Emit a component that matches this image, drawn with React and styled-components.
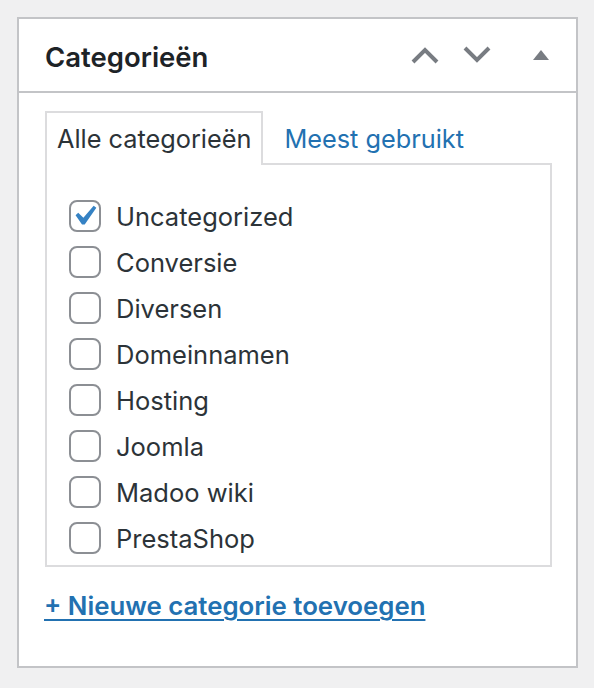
import React from 'react';
import styled, { createGlobalStyle } from 'styled-components';

const categories = [
    { name: 'Uncategorized', checked: true },
    { name: 'Conversie' },
    { name: 'Diversen' },
    { name: 'Domeinnamen' },
    { name: 'Hosting' },
    { name: 'Joomla' },
    { name: 'Madoo wiki' },
    { name: 'PrestaShop' },
];

const App = () => {
    return (
        <>
            <GlobalStyle />
            <Panel>
                <Header>
                    <Title>Categorieën</Title>
                    <Handles>
                        <HandleButton aria-label="Omhoog">
                            <svg width="28" height="18" viewBox="0 0 28 18">
                                <polyline points="2,16 14,4 26,16" fill="none" stroke="#787c82" strokeWidth="4" />
                            </svg>
                        </HandleButton>
                        <HandleButton aria-label="Omlaag">
                            <svg width="28" height="18" viewBox="0 0 28 18">
                                <polyline points="2,2 14,14 26,2" fill="none" stroke="#787c82" strokeWidth="4" />
                            </svg>
                        </HandleButton>
                        <HandleButton $last aria-label="Inklappen">
                            <svg width="16" height="10" viewBox="0 0 16 10">
                                <polygon points="8,0 16,10 0,10" fill="#787c82" />
                            </svg>
                        </HandleButton>
                    </Handles>
                </Header>
                <Body>
                    <Tabs>
                        <Tab $active>Alle categorieën</Tab>
                        <Tab>Meest gebruikt</Tab>
                    </Tabs>
                    <TabPanel>
                        <CategoryList>
                            {categories.map((cat) => (
                                <CategoryRow key={cat.name}>
                                    <CheckBox>
                                        {cat.checked && (
                                            <svg width="40" height="40" viewBox="0 0 20 20">
                                                <path
                                                    d="M14.83 4.89l1.34.94-5.81 8.38H9.02L5.78 9.67l1.34-1.25 2.57 2.4z"
                                                    fill="#3582c4"
                                                />
                                            </svg>
                                        )}
                                    </CheckBox>
                                    <Label>{cat.name}</Label>
                                </CategoryRow>
                            ))}
                        </CategoryList>
                    </TabPanel>
                    <AddLink href="#">+ Nieuwe categorie toevoegen</AddLink>
                </Body>
            </Panel>
        </>
    );
};

export default App;

const GlobalStyle = createGlobalStyle`
    body {
        margin: 0;
        background: #f0f0f1;
        font-family: Inter, 'Liberation Sans', sans-serif;
    }
`;

const Panel = styled.div`
    margin: 17px 16px 0 17px;
    width: 557px;
    height: 647px;
    background: #fff;
    border: 2px solid #c3c4c7;
`;

const Header = styled.div`
    display: flex;
    align-items: center;
    justify-content: space-between;
    height: 72px;
    border-bottom: 2px solid #c3c4c7;
`;

const Title = styled.h2`
    margin: 4px 0 0 26px;
    font-size: 27.5px;
    font-weight: 600;
    color: #1d2327;
`;

const Handles = styled.div`
    display: flex;
    align-items: center;
    padding-right: 9px;
`;

const HandleButton = styled.button`
    display: flex;
    align-items: center;
    justify-content: center;
    width: 52px;
    height: 52px;
    margin-left: ${pr => pr.$last ? '12px' : '0'};
    padding: 0;
    background: none;
    border: none;
    cursor: pointer;
`;

const Body = styled.div`
    padding: 18px 24px 0 26px;
`;

const Tabs = styled.div`
    display: flex;
    align-items: flex-end;
    margin-bottom: -2px;
    position: relative;
    z-index: 1;
`;

const Tab = styled.div`
    display: flex;
    align-items: center;
    height: 50px;
    padding: 0 ${pr => pr.$active ? '10px' : '19px'} 2px;
    font-size: 25.3px;
    color: ${pr => pr.$active ? '#2c3338' : '#2271b1'};
    background: ${pr => pr.$active ? '#fff' : 'transparent'};
    border: 2px solid ${pr => pr.$active ? '#dcdcde' : 'transparent'};
    border-bottom: none;
`;

const TabPanel = styled.div`
    border: 2px solid #dcdcde;
    width: 507px;
    padding: 28px 0 4px 22px;
    box-sizing: border-box;
`;

const CategoryList = styled.ul`
    list-style: none;
    margin: 0;
    padding: 0;
`;

const CategoryRow = styled.li`
    display: flex;
    align-items: center;
    height: 46px;
`;

const CheckBox = styled.span`
    display: flex;
    align-items: center;
    justify-content: center;
    width: 32px;
    height: 32px;
    box-sizing: border-box;
    border: 2px solid #8c8f94;
    border-radius: 8px;
    background: #fff;
    overflow: visible;
    flex-shrink: 0;

    svg {
        flex-shrink: 0;
        margin-left: -3px;
    }
`;

const Label = styled.span`
    margin-left: 15px;
    font-size: 25.5px;
    color: #2c3338;
`;

const AddLink = styled.a`
    display: inline-block;
    margin-top: 23px;
    margin-left: -1px;
    font-size: 25.8px;
    font-weight: 600;
    color: #2271b1;
    text-decoration: underline;
    text-underline-offset: 4px;
    text-decoration-thickness: 2px;
`;
